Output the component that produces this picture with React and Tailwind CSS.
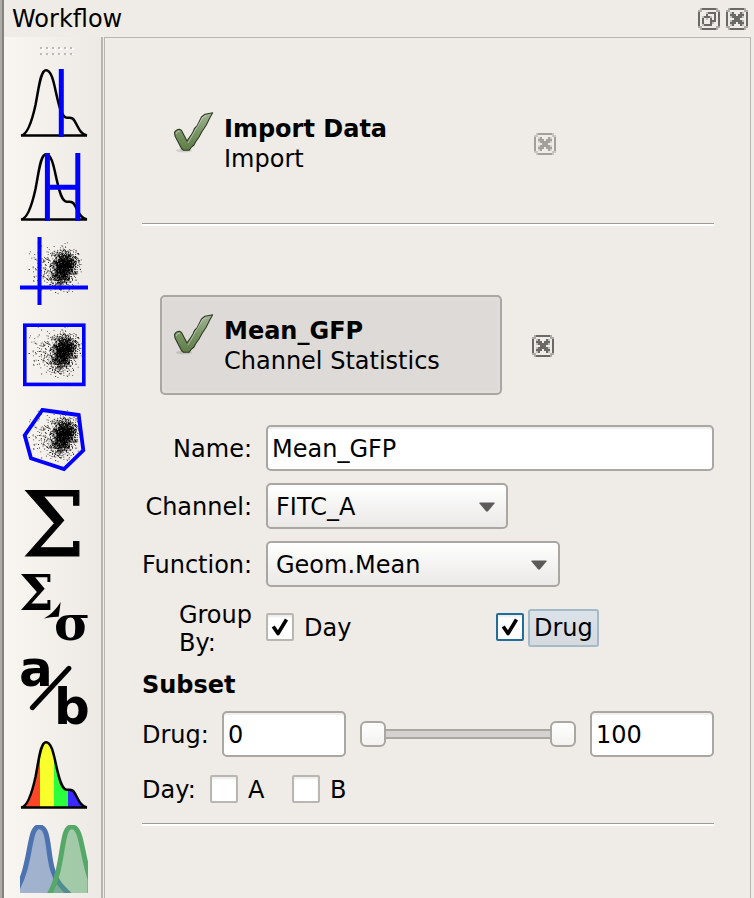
import React, { useState } from "react";

const HISTOGRAM =
  "M1 66.5 C7 66 12 52 15.5 36 C19 18 20.5 1.2 26 1.2 C32 1.2 34 15 37 28 C39.5 39 42 48.5 47 48.8 C50 49 52 47.8 54 51 C58 57 60 65.5 67 66.5 Z";

function makeScatter() {
  let seed = 7;
  const rand = () => {
    seed = (seed * 1664525 + 1013904223) % 4294967296;
    return (seed + 1) / 4294967297;
  };
  const gauss = () => Math.sqrt(-2 * Math.log(rand())) * Math.cos(2 * Math.PI * rand());
  const cluster = (n, cx, cy, sx, sy) => {
    let d = "";
    for (let i = 0; i < n; i++) {
      const x = cx + gauss() * sx;
      const y = cy + gauss() * sy;
      if (x > 4 && x < 62 && y > 5 && y < 58) d += `M${x.toFixed(1)} ${y.toFixed(1)}h.8v.8h-.8z`;
    }
    return d;
  };
  return (
    cluster(1150, 45.5, 26, 5.6, 6.2) + cluster(750, 40.5, 37, 5.8, 7) + cluster(260, 32, 31, 11, 10)
  );
}

const SCATTER = makeScatter();

function Histogram() {
  return <path d={HISTOGRAM} fill="none" stroke="#000" strokeWidth="2.5" />;
}

function Scatter() {
  return <path d={SCATTER} fill="#000" />;
}

const TOOLS = [
  {
    name: "Threshold",
    art: (
      <>
        <Histogram />
        <path d="M41.3 0V68" stroke="#00f" strokeWidth="5" />
      </>
    ),
  },
  {
    name: "Range",
    art: (
      <>
        <Histogram />
        <path d="M27.4 0V68M57.8 0V68M27 34.3H58" stroke="#00f" strokeWidth="5" />
      </>
    ),
  },
  {
    name: "Quad",
    art: (
      <>
        <Scatter />
        <path d="M19.5 0V68M0 50.5H68" stroke="#00f" strokeWidth="4" />
      </>
    ),
  },
  {
    name: "Range 2D",
    art: (
      <>
        <Scatter />
        <rect x="4.8" y="4.2" width="59" height="59.2" fill="none" stroke="#00f" strokeWidth="3.6" />
      </>
    ),
  },
  {
    name: "Polygon",
    art: (
      <>
        <Scatter />
        <path d="M22.3 5L58.7 10L63.3 45.3L44 64L11 53.3L4.7 30.3Z" fill="none" stroke="#00f" strokeWidth="3.8" />
      </>
    ),
  },
  {
    name: "Channel Statistics",
    art: (
      <text x="2" y="66.5" fontSize="89" stroke="#000" strokeWidth="1" fontFamily="DejaVu Serif, serif">
        Σ
      </text>
    ),
  },
  {
    name: "Transform Statistics",
    art: (
      <>
        <text x="-1" y="36.5" fontSize="49" fontWeight="bold" fontFamily="DejaVu Serif, serif">
          Σ
        </text>
        <path d="M24 45.5Q34 40 40.7 29L38.7 43.7Q31 43.5 24 45.5Z" />
        <text x="34" y="67" fontSize="49" fontWeight="bold" fontFamily="DejaVu Serif, serif">
          σ
        </text>
      </>
    ),
  },
  {
    name: "Ratio",
    art: (
      <>
        <text x="-1" y="29" fontSize="50" fontWeight="bold" fontFamily="DejaVu Sans, sans-serif">
          a
        </text>
        <path d="M12.3 50.7L49 11.3" stroke="#000" strokeWidth="5" strokeLinecap="round" />
        <text x="34" y="67" fontSize="50" fontWeight="bold" fontFamily="DejaVu Sans, sans-serif">
          b
        </text>
      </>
    ),
  },
  {
    name: "Binning",
    art: (
      <>
        <clipPath id="bins">
          <path d={HISTOGRAM} />
        </clipPath>
        <g clipPath="url(#bins)">
          <rect width="20" height="68" fill="#ff4629" />
          <rect x="20" width="14" height="68" fill="#f8ff2a" />
          <rect x="34" width="14" height="68" fill="#2cff3c" />
          <rect x="48" width="20" height="68" fill="#3a2aff" />
        </g>
        <Histogram />
      </>
    ),
  },
  {
    name: "Gaussian Mixture",
    clipped: true,
    art: (
      <>
        <path
          d="M-4 66C12 40 8 1.8 19 1.8C30 1.8 27 28 33 46C36 56 41 61 49 69V76H-8Z"
          fill="#4c72b0"
          fillOpacity=".5"
          stroke="#4c72b0"
          strokeWidth="5"
        />
        <path
          d="M29 70C45 42 40 1.8 51.5 1.8C62 1.8 61 26 70 54V76H29Z"
          fill="#55a868"
          fillOpacity=".5"
          stroke="#55a868"
          strokeWidth="5"
        />
      </>
    ),
  },
];

const CROSS = ["lX...Xl", "XXX.XXX", "lXXXXXl", "..XXX..", "lXXXXXl", "XXX.XXX", "lX...Xl"];
const RESTORE = ["..lXXXX", "..X...X", "lXXXl.X", "X.l.X.X", "X...XXX", "X...Xl.", "lXXXX.."];

function TitleGlyph({ rows }) {
  return (
    <svg viewBox="0 0 11 11" className="size-[22px]" shapeRendering="crispEdges" fill="currentColor">
      <path d="M2 0h7v1h-7zM2 10h7v1h-7zM0 2h1v7h-1zM10 2h1v7h-1z" />
      <path d="M1 0h1v1h-1zM0 1h2v1h-2zM9 0h1v1h-1zM9 1h2v1h-2zM0 9h2v1h-2zM1 10h1v1h-1zM9 9h2v1h-2zM9 10h1v1h-1z" opacity=".5" />
      {rows.map((row, y) =>
        [...row].map((cell, x) =>
          cell === "." ? null : (
            <rect key={x + "-" + y} x={x + 2} y={y + 2} width="1" height="1" opacity={cell === "l" ? 0.35 : 1} />
          )
        )
      )}
    </svg>
  );
}

function CheckMark() {
  return (
    <svg viewBox="0 0 42 42" className="size-[42px] shrink-0">
      <defs>
        <linearGradient id="leaf" x1="0" y1="0" x2="0" y2="1">
          <stop offset="0" stopColor="#a3b596" />
          <stop offset=".5" stopColor="#7b9666" />
          <stop offset="1" stopColor="#5f7c47" />
        </linearGradient>
      </defs>
      <ellipse cx="12" cy="38.5" rx="8" ry="1.8" fill="#000" opacity=".13" />
      <path
        d="M2.5 20.5Q4 17.5 7.5 17.3L9.5 18.5L15 29L17 26L19.5 22.5L21 20L22.5 16.5L25 14L29.5 5L33 2.2L40.7 .8L38 5.5L34 13.5L30 19.5L27 25L23.5 30L22 33L19.5 35L17 38.3L11.5 38.3L9.5 36.5L3 24Z"
        fill="url(#leaf)"
        stroke="#2c3a24"
        strokeWidth="1.1"
        strokeLinejoin="round"
      />
      <path d="M4 22Q5 19 8 19M16 31L23 18.5L30.5 5.5L34 3.5" fill="none" stroke="#fff" strokeOpacity=".45" strokeWidth="1" />
    </svg>
  );
}

function Operation({ title, kind, selected }) {
  return (
    <div className="flex items-center pl-[18px]">
      <button
        type="button"
        className={
          "flex h-[100px] w-[342px] items-start rounded-[5px] border-2 pt-[17px] pl-[10px] text-left " +
          (selected
            ? "border-[#aaa6a2] bg-[#dddad7] shadow-[inset_0_0_3px_1px_#e4e1de]"
            : "border-transparent")
        }
      >
        <CheckMark />
        <span className="ml-[10px] pt-0.5 leading-[30px]">
          <span className="block font-bold">{title}</span>
          <span className="block">{kind}</span>
        </span>
      </button>
      <button
        type="button"
        aria-label={"Remove " + title}
        disabled={!selected}
        className={"pt-0.5 " + (selected ? "ml-[30px] text-[#6b6965]" : "ml-8 text-[#a3a09c]")}
      >
        <TitleGlyph rows={CROSS} />
      </button>
    </div>
  );
}

function Divider() {
  return <hr className="h-[3px] border-0 border-t border-[#9c9a97] bg-white" />;
}

const FIELD =
  "h-[46px] min-w-0 rounded-[5px] border-2 border-[#aaa6a2] bg-white px-1 pt-0.5 shadow-[inset_0_2px_1px_#f0efee] outline-none";

function Row({ id, label, children }) {
  return (
    <div className="flex items-center">
      <label htmlFor={id} className="mr-[14px] w-[110px] shrink-0 pt-0.5 text-right whitespace-nowrap">
        {label}
      </label>
      {children}
    </div>
  );
}

function Select({ id, options, className }) {
  return (
    <div className={"grid items-center " + className}>
      <select
        id={id}
        className="h-[46px] w-full appearance-none rounded-[5px] border-2 border-[#aaa6a2] bg-linear-to-b from-white to-[#ebe9e7] pt-0.5 pl-2 outline-none [grid-area:1/1]"
      >
        {options.map((o) => (
          <option key={o}>{o}</option>
        ))}
      </select>
      <svg viewBox="0 0 16 10" className="pointer-events-none mt-0.5 mr-[13px] h-[10px] w-4 justify-self-end [grid-area:1/1]">
        <path d="M.5 .5H15.5V1.5L8.8 9.5H7.2L.5 1.5Z" fill="#5c5b5a" />
      </svg>
    </div>
  );
}

function Check({ id, label, initial, focused, className = "" }) {
  const [on, setOn] = useState(!!initial);
  return (
    <div className={"flex items-center " + className}>
      <span className="grid size-7 shrink-0 place-items-center">
        <input
          id={id}
          type="checkbox"
          checked={on}
          onChange={() => setOn(!on)}
          className={
            "size-7 appearance-none rounded-[2px] border-2 bg-white shadow-[inset_0_2px_2px_#ececeb] outline-none [grid-area:1/1] " +
            (focused ? "border-[#236d9b]" : "border-[#bab7b3]")
          }
        />
        {on && (
          <svg viewBox="0 0 28 28" className="pointer-events-none size-7 [grid-area:1/1]">
            <path d="M7.2 13.5L12 20.5L20.5 6.5" fill="none" stroke="#000" strokeWidth="3.6" strokeLinejoin="round" />
          </svg>
        )}
      </span>
      <label
        htmlFor={id}
        className={
          focused
            ? "mt-0.5 ml-1 rounded-[3px] border-2 border-[#a5bac7] bg-linear-to-b from-[#dbe2e9] to-[#d4dade] px-1 leading-[34px]"
            : "ml-[10px] pt-0.5 leading-[30px]"
        }
      >
        {label}
      </label>
    </div>
  );
}

const RANGE =
  "pointer-events-none h-[26px] w-full appearance-none bg-transparent outline-none [grid-area:1/1] [&::-webkit-slider-thumb]:pointer-events-auto [&::-webkit-slider-thumb]:size-[26px] [&::-webkit-slider-thumb]:appearance-none [&::-webkit-slider-thumb]:rounded-[6px] [&::-webkit-slider-thumb]:border-2 [&::-webkit-slider-thumb]:border-[#aaa6a2] [&::-webkit-slider-thumb]:bg-linear-to-b [&::-webkit-slider-thumb]:from-white [&::-webkit-slider-thumb]:to-[#f3f2f0]";

export default function App() {
  const [low, setLow] = useState("0");
  const [high, setHigh] = useState("100");
  return (
    <div className="flex min-h-screen border-l-2 border-[#adaba8] bg-[#efebe6] text-[24px] text-black [font-family:'DejaVu_Sans',sans-serif]">
      <div className="flex min-w-0 flex-1 flex-col border-l-2 border-[#85817d]">
        <header className="flex h-[37px] shrink-0 items-center pr-[6px] pl-2">
          <h1 className="flex-1 leading-[30px]">Workflow</h1>
          <div className="flex gap-[6px] text-[#6b6965]">
            <button type="button" aria-label="Float">
              <TitleGlyph rows={RESTORE} />
            </button>
            <button type="button" aria-label="Close">
              <TitleGlyph rows={CROSS} />
            </button>
          </div>
        </header>
        <div className="flex flex-1">
          <nav
            aria-label="Operations"
            className="flex w-[99px] shrink-0 flex-col border-r-2 border-[#b8b4b0] bg-linear-to-r from-[#f9f6f1] to-[#edeae5] pt-[10px] pl-4"
          >
            <svg viewBox="0 0 34 8" className="ml-5 h-2 w-[34px]" shapeRendering="crispEdges">
              {[0, 6, 12, 18, 24, 30].map((x) =>
                [0, 6].map((y) => (
                  <g key={x + "-" + y}>
                    <rect x={x + 1} y={y + 1} width="3" height="2" fill="#fff" />
                    <rect x={x} y={y} width="2" height="2" fill="#bdbab6" />
                  </g>
                ))
              )}
            </svg>
            <div className="mt-[14px] flex flex-col items-start gap-4">
              {TOOLS.map((t) => (
                <button key={t.name} type="button" aria-label={t.name}>
                  <svg
                    viewBox="0 0 68 68"
                    className={"size-[68px] " + (t.clipped ? "overflow-hidden" : "overflow-visible")}
                  >
                    {t.art}
                  </svg>
                </button>
              ))}
            </div>
          </nav>
          <main className="mr-[3px] ml-px min-w-0 flex-1 border border-b-0 border-[#b8b4b0] pt-[55px] pr-9 pl-[37px]">
            <Operation title="Import Data" kind="Import" />
            <div className="mt-[30px] mb-[69px]">
              <Divider />
            </div>
            <Operation title="Mean_GFP" kind="Channel Statistics" selected />
            <form className="mt-[30px]" onSubmit={(e) => e.preventDefault()}>
              <div className="flex flex-col gap-3">
                <Row id="name" label="Name:">
                  <input id="name" type="text" defaultValue="Mean_GFP" className={FIELD + " flex-1"} />
                </Row>
                <Row id="channel" label="Channel:">
                  <Select id="channel" options={["FITC_A"]} className="w-[242px]" />
                </Row>
                <Row id="function" label="Function:">
                  <Select id="function" options={["Geom.Mean"]} className="w-[294px]" />
                </Row>
                <div role="group" aria-labelledby="group-by" className="flex items-start">
                  <div className="mr-[14px] flex w-[110px] shrink-0 justify-end pt-0.5">
                    <span id="group-by" className="w-min leading-7">
                      Group By:
                    </span>
                  </div>
                  <div className="flex h-14 flex-1 items-center">
                    <Check id="by-day" label="Day" initial className="w-[230px]" />
                    <Check id="by-drug" label="Drug" initial focused />
                  </div>
                </div>
              </div>
              <h2 className="mt-[13px] leading-[30px] font-bold">Subset</h2>
              <div className="mt-[11px] flex items-center">
                <label htmlFor="low" className="w-20 shrink-0 pt-0.5">
                  Drug:
                </label>
                <input
                  id="low"
                  type="text"
                  value={low}
                  onChange={(e) => setLow(e.target.value)}
                  className={FIELD + " w-[124px]"}
                />
                <div className="mx-[14px] grid min-w-0 flex-1 items-center">
                  <div className="mx-3 h-[10px] border-y-2 border-[#aaa6a2] bg-[#d5d2cf] [grid-area:1/1]" />
                  <input
                    type="range"
                    aria-label="Lowest drug value"
                    value={Number(low) || 0}
                    onChange={(e) => setLow(e.target.value)}
                    className={RANGE}
                  />
                  <input
                    type="range"
                    aria-label="Highest drug value"
                    value={Number(high) || 0}
                    onChange={(e) => setHigh(e.target.value)}
                    className={RANGE}
                  />
                </div>
                <input
                  id="high"
                  type="text"
                  aria-label="Highest drug value"
                  value={high}
                  onChange={(e) => setHigh(e.target.value)}
                  className={FIELD + " w-[124px]"}
                />
              </div>
              <div role="group" aria-labelledby="subset-day" className="mt-4 mb-[18px] flex items-center">
                <span id="subset-day" className="w-[68px] pt-0.5 leading-[30px]">
                  Day:
                </span>
                <Check id="day-a" label="A" className="w-[82px]" />
                <Check id="day-b" label="B" />
              </div>
            </form>
            <Divider />
          </main>
        </div>
      </div>
    </div>
  );
}
